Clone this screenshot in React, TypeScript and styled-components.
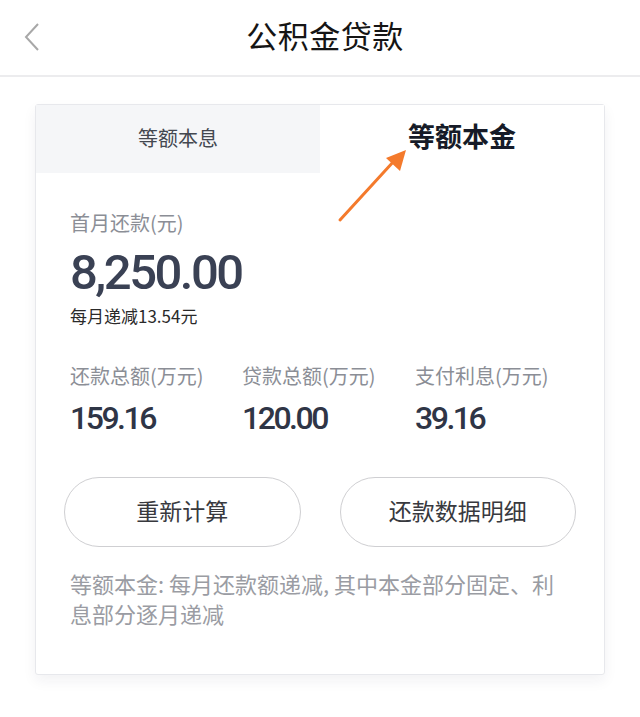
import React from "react"
import styled, { createGlobalStyle } from "styled-components"

const GlobalStyle = createGlobalStyle`
  body {
    margin: 0;
    background: #ffffff;
    font-family: "Noto Sans CJK SC", "Noto Sans", Roboto, sans-serif;
  }
`

const stats = [
  { label: "还款总额(万元)", value: "159.16" },
  { label: "贷款总额(万元)", value: "120.00" },
  { label: "支付利息(万元)", value: "39.16" },
]

export default function App() {
  return (
    <>
      <GlobalStyle />
      <S.Page>
        <S.Header>
          <S.Back aria-label="返回">
            <svg width="20" height="32" viewBox="0 0 20 32">
              <polyline points="14,3 2,16 14,29" fill="none" stroke="#a8a8a8" strokeWidth="2" />
            </svg>
          </S.Back>
          <S.Title>公积金贷款</S.Title>
        </S.Header>

        <S.Card>
          <S.Tabs>
            <S.Tab active={false}>等额本息</S.Tab>
            <S.Tab active={true}>等额本金</S.Tab>
          </S.Tabs>

          <S.Arrow width="80" height="80" viewBox="0 0 80 80">
            <line x1="6" y1="74" x2="60" y2="15" stroke="#f47a2c" strokeWidth="3" strokeLinecap="round" />
            <polygon points="72,4 52,12 66,25" fill="#f47a2c" />
          </S.Arrow>

          <S.Section>
            <S.Label>首月还款(元)</S.Label>
            <S.BigAmount>8,250.00</S.BigAmount>
            <S.Note>每月递减13.54元</S.Note>
          </S.Section>

          <S.Stats>
            {stats.map((item) => (
              <S.Stat key={item.label}>
                <S.Label>{item.label}</S.Label>
                <S.StatValue>{item.value}</S.StatValue>
              </S.Stat>
            ))}
          </S.Stats>

          <S.Buttons>
            <S.Button>重新计算</S.Button>
            <S.Button>还款数据明细</S.Button>
          </S.Buttons>

          <S.Desc>等额本金: 每月还款额递减, 其中本金部分固定、利息部分逐月递减</S.Desc>
        </S.Card>
      </S.Page>
    </>
  )
}

const S = {
  Page: styled.div`
    width: 640px;
    min-height: 717px;
    background: #fff;
  `,
  Header: styled.div`
    position: relative;
    height: 75px;
    border-bottom: 2px solid #ececee;
    display: flex;
    align-items: center;
    justify-content: center;
  `,
  Back: styled.div`
    position: absolute;
    left: 24px;
    top: 21px;
    width: 20px;
    height: 32px;
  `,
  Title: styled.h1`
    margin: 0 0 6px 10px;
    font-size: 31px;
    font-weight: 400;
    color: #151515;
    letter-spacing: 0.5px;
  `,
  Card: styled.div`
    position: relative;
    margin: 27px 0 0 35px;
    width: 570px;
    height: 571px;
    box-sizing: border-box;
    border: 1px solid #e7e8ec;
    border-radius: 3px;
    background: #fff;
    box-shadow: 0 6px 14px rgba(30, 40, 70, 0.06);
  `,
  Tabs: styled.div`
    display: grid;
    grid-template-columns: 284px 1fr;
    height: 68px;
  `,
  Tab: styled.div<{ active: boolean }>`
    display: flex;
    align-items: center;
    justify-content: center;
    background: ${(p) => (p.active ? "#ffffff" : "#f5f6f8")};
    color: ${(p) => (p.active ? "#161b28" : "#444850")};
    font-size: ${(p) => (p.active ? "27px" : "20px")};
    font-weight: ${(p) => (p.active ? 700 : 400)};
    padding: ${(p) => (p.active ? "0 0 8px 0" : "0 0 4px 0")};
  `,
  Arrow: styled.svg`
    position: absolute;
    left: 298px;
    top: 41px;
  `,
  Section: styled.div`
    padding: 36px 34px 0;
  `,
  Label: styled.div`
    font-size: 20px;
    line-height: 28px;
    color: #8b8e96;
  `,
  BigAmount: styled.div`
    margin-top: 10px;
    font-family: Roboto, "Noto Sans", sans-serif;
    font-size: 49px;
    font-weight: 500;
    line-height: 52px;
    letter-spacing: -2.5px;
    color: #3a4154;
  `,
  Note: styled.div`
    margin-top: 6px;
    font-size: 17px;
    line-height: 22px;
    color: #2a2a2a;
  `,
  Stats: styled.div`
    display: grid;
    grid-template-columns: 172px 173px 1fr;
    padding: 35px 34px 0;
  `,
  Stat: styled.div`
    display: flex;
    flex-direction: column;
  `,
  StatValue: styled.div`
    margin-top: 10px;
    font-family: Roboto, "Noto Sans", sans-serif;
    font-size: 32px;
    font-weight: 500;
    line-height: 36px;
    letter-spacing: -2.5px;
    color: #2f3546;
  `,
  Buttons: styled.div`
    display: flex;
    gap: 39px;
    padding: 41px 28px 0;
  `,
  Button: styled.button`
    flex: 1;
    height: 70px;
    border: 1.5px solid #cfcfd2;
    border-radius: 35px;
    background: #fff;
    font-family: "Noto Sans CJK SC", sans-serif;
    font-size: 23px;
    color: #38393e;
    padding: 0 0 4px;
  `,
  Desc: styled.p`
    margin: 21px 34px 0;
    font-size: 22px;
    line-height: 30px;
    color: #9a9ca3;
  `,
}
